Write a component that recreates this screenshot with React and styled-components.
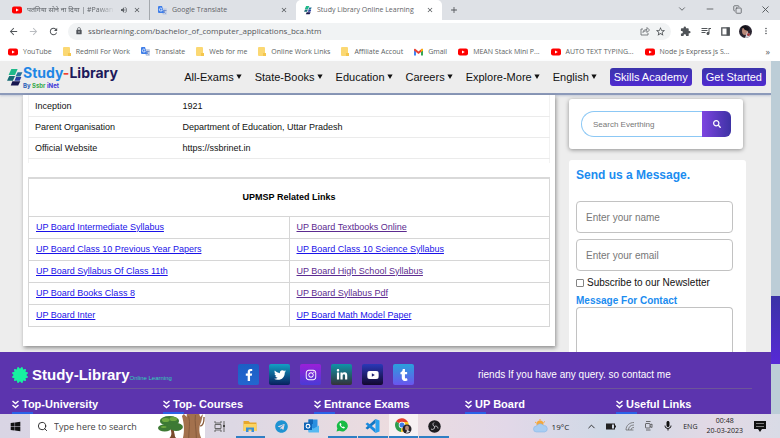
import React from 'react';
import styled, { createGlobalStyle, css } from 'styled-components';
import {
  FaFacebookF, FaTwitter, FaInstagram, FaLinkedinIn, FaYoutube, FaTumblr,
  FaSearch, FaCertificate, FaWindows, FaTelegram,
} from 'react-icons/fa';
import {
  MdArrowBack, MdArrowForward, MdRefresh, MdLock, MdStarBorder, MdClose, MdAdd,
  MdMoreVert, MdExtension, MdQueueMusic, MdVolumeUp, MdMic,
} from 'react-icons/md';
import { ChevronDown, ChevronUp, Minus, Copy, X, Search } from 'lucide-react';

const sans = '"Liberation Sans", Arial, sans-serif';
const chrome = '"Open Sans", "Noto Sans", sans-serif';

const GlobalStyle = createGlobalStyle`
  *, *::before, *::after { box-sizing: border-box; }
  body { margin: 0; font-family: ${sans}; color: #111; }
  button, input, textarea { font-family: inherit; margin: 0; }
  button { border: 0; padding: 0; background: none; color: inherit; cursor: pointer; }
  svg { display: block; flex: none; }
`;

const Screen = styled.div`
  min-height: 100vh;
  display: flex;
  flex-direction: column;
  overflow: hidden;
`;

/* ---------- browser chrome ---------- */

const TabStrip = styled.div`
  display: flex;
  align-items: stretch;
  height: 20px;
  padding-left: 4px;
  background: #dee1e6;
  font: 7px/20px ${chrome};
  color: #5f6368;
`;

const Tab = styled.div`
  display: flex;
  align-items: center;
  gap: 5px;
  width: 146px;
  padding: 0 8px;
  white-space: nowrap;
  ${(p) => p.$active && css`
    background: #fff;
    border-radius: 5px 5px 0 0;
  `}
  ${(p) => p.$divided && css`
    border-right: 1px solid #a5a9ae;
  `}
`;

const TabTitle = styled.span`
  flex: 1;
  min-width: 0;
  overflow: hidden;
  ${(p) => p.$fade && css`
    mask-image: linear-gradient(90deg, #000 80%, transparent);
  `}
`;

const IconButton = styled.button`
  display: grid;
  place-items: center;
  flex: none;
  color: ${(p) => p.$color || '#505458'};
`;

const WindowControls = styled.div`
  display: flex;
  align-items: center;
  gap: 18px;
  margin-left: auto;
  padding: 0 9px 2px 0;
`;

const NewTab = styled(IconButton)`
  padding: 0 7px;
`;

const Toolbar = styled.div`
  display: flex;
  align-items: center;
  gap: 9px;
  height: 22px;
  padding: 0 9px 0 8px;
  background: #fff;
`;

const Omnibox = styled.div`
  flex: 1;
  display: flex;
  align-items: center;
  gap: 5px;
  height: 17px;
  padding: 0 5px 0 7px;
  border-radius: 9px;
  background: #f1f3f4;
  color: #50545a;
`;

const Address = styled.input`
  flex: 1;
  min-width: 0;
  padding: 0;
  border: 0;
  outline: 0;
  background: none;
  font: 8px/16px ${chrome};
  color: #54575b;
`;

const Avatar = styled.span`
  width: 13px;
  height: 13px;
  border-radius: 50%;
  overflow: hidden;
`;

const Bookmarks = styled.nav`
  display: flex;
  align-items: center;
  gap: 11px;
  height: 19px;
  padding: 0 10px 0 8px;
  background: #fff;
  font: 7px/18px ${chrome};
`;

const Bookmark = styled.a`
  display: flex;
  align-items: center;
  gap: 5px;
  color: #5c5f63;
  text-decoration: none;
  white-space: nowrap;
`;

const More = styled.button`
  margin-left: auto;
  font-size: 9px;
  line-height: 9px;
  color: #5c5f63;
`;

/* ---------- website ---------- */

const Viewport = styled.div`
  flex: 1;
  display: flex;
`;

const Site = styled.div`
  flex: 1;
  min-width: 0;
  display: flex;
  flex-direction: column;
  background: #ededed;
`;

const ScrollTrack = styled.div`
  display: grid;
  grid-template-rows: 235fr 68fr 50fr;
  width: 9px;
  background: #bccdd7;
`;

const ScrollThumb = styled.div`
  grid-row: 2;
  background: linear-gradient(#3a33a6, #5729d6);
`;

const SiteHeader = styled.header`
  display: flex;
  align-items: center;
  height: 34px;
  padding: 0 5px 0 7px;
  border-bottom: 2px solid #8c9aba;
  background: #ededed;
  box-shadow: 0 1px 2px #9aa5c080;
`;

const Brand = styled.a`
  display: flex;
  align-items: center;
  margin-right: auto;
  text-decoration: none;
`;

const BrandText = styled.span`
  display: flex;
  flex-direction: column;
  font-family: Inter, ${sans};
  font-weight: 700;
`;

const BrandName = styled.span`
  font-size: 14px;
  line-height: 18px;
  color: #1d1a5b;
`;

const BrandTag = styled.span`
  font-size: 6px;
  line-height: 8px;
  color: #2c61b8;
`;

const Ink = styled.span`
  color: ${(p) => p.$color};
`;

const Menu = styled.nav`
  display: flex;
  align-items: center;
  gap: 13px;
`;

const MenuItem = styled.button`
  display: flex;
  align-items: center;
  gap: 2px;
  font-size: 11px;
  line-height: 16px;
  color: #111;
  white-space: nowrap;
`;

const Actions = styled.div`
  display: flex;
  gap: 10px;
`;

const Action = styled.button`
  height: 18px;
  padding: 0 4px;
  border-radius: 3px;
  background: linear-gradient(#3b34ab, #4f2bd0);
  color: #fff;
  font-size: 11px;
  white-space: nowrap;
`;

const Content = styled.main`
  flex: 1;
  display: flex;
  gap: 14px;
  padding: 0 25px 0 23px;
`;

const Article = styled.article`
  flex: 1;
  align-self: flex-start;
  min-width: 0;
  margin-bottom: 6px;
  padding: 0 5px 19px;
  background: #fff;
  box-shadow: 1px 2px 4px #00000066;
`;

const FactTable = styled.table`
  width: 100%;
  margin-bottom: 14px;
  border-collapse: collapse;
  border: solid #f2f2f2;
  border-width: 0 1px;
  font-size: 9px;
  line-height: 20px;
  th, td {
    padding: 0 0 0 6px;
    border-bottom: 1px solid #ebebeb;
    font-weight: 400;
    text-align: left;
  }
  tr:first-child > * { padding-top: 1px; }
  th { width: 148px; }
  &::after { content: ''; display: block; height: 4px; }
`;

const LinkTable = styled.table`
  width: 100%;
  table-layout: fixed;
  border-collapse: collapse;
  border: 1px solid #d9d9d9;
  border-top-width: 2px;
  font-size: 9px;
  line-height: 21px;
  th { height: 38px; font-size: 9px; font-weight: 700; color: #000; }
  td { padding: 0 0 0 7px; border: 1px solid #d6d6d6; }
`;

const PageLink = styled.a`
  color: ${(p) => (p.$visited ? '#5c2b90' : '#1a12e8')};
  text-decoration: underline;
`;

const Sidebar = styled.aside`
  display: flex;
  flex-direction: column;
  gap: 11px;
  width: 177px;
  padding-top: 4px;
`;

const SearchCard = styled.form`
  display: flex;
  margin-right: 3px;
  padding: 12px;
  border-radius: 3px;
  background: #fff;
  box-shadow: 0 1px 4px #00000066;
`;

const SearchField = styled.input`
  flex: 1;
  min-width: 0;
  height: 26px;
  padding: 0 11px;
  border: 1px solid #8cc8f5;
  border-right: 0;
  border-radius: 13px 0 0 13px;
  outline: 0;
  font-size: 8px;
  &::placeholder { color: #777; }
`;

const SearchButton = styled.button`
  display: grid;
  place-items: center;
  width: 29px;
  height: 26px;
  border-radius: 0 6px 6px 0;
  background: linear-gradient(90deg, #7d45e0, #3d32a4);
  color: #fff;
`;

const MessageCard = styled.form`
  flex: 1;
  display: flex;
  flex-direction: column;
  padding: 8px 13px 0 7px;
  border-radius: 3px 3px 0 0;
  background: #fff;
`;

const MessageTitle = styled.h2`
  margin: 0 0 18px;
  font-size: 12px;
  line-height: 15px;
  color: #1b8cf0;
`;

const field = css`
  width: 100%;
  padding: 0 9px;
  border: 1px solid #c2c2c2;
  border-radius: 4px;
  outline: 0;
  background: #fff;
  font-size: 10px;
`;

const TextField = styled.input`
  ${field}
  height: 32px;
  margin-bottom: 6px;
  &::placeholder { color: #777; }
`;

const CheckLine = styled.label`
  display: flex;
  align-items: center;
  gap: 3px;
  margin-bottom: 6px;
  font-size: 10px;
  line-height: 12px;
  white-space: nowrap;
`;

const Check = styled.input`
  appearance: none;
  width: 8px;
  height: 8px;
  border: 1px solid #858585;
  border-radius: 1px;
  background: #fff;
  &:checked { background: #1b8cf0; }
`;

const MessageLabel = styled.label`
  font-size: 10px;
  font-weight: 700;
  line-height: 12px;
  color: #1b8cf0;
`;

const MessageBox = styled.textarea`
  ${field}
  flex: 1;
  height: 44px;
  padding-top: 6px;
  border-bottom: 0;
  border-radius: 4px 4px 0 0;
  resize: none;
`;

const SiteFooter = styled.footer`
  padding: 0 4px 0 12px;
  background: #5c34ae;
  color: #fff;
`;

const FooterTop = styled.div`
  display: grid;
  grid-template-columns: 226fr 240fr 274fr;
  align-items: center;
  height: 37px;
  margin-right: 15px;
  padding-top: 9px;
  border-bottom: 1px solid #6d5499;
`;

const FooterBrand = styled.a`
  display: flex;
  align-items: center;
  gap: 4px;
  color: #fff;
  font-size: 15px;
  font-weight: 700;
  text-decoration: none;
  white-space: nowrap;
`;

const FooterTag = styled.span`
  font-size: 6px;
  font-weight: 400;
  color: #2fd4b8;
`;

const Socials = styled.div`
  display: flex;
  gap: 10px;
`;

const Social = styled.a`
  display: grid;
  place-items: center;
  width: 21px;
  height: 21px;
  border-radius: 2px;
  background: linear-gradient(${(p) => p.$from}, ${(p) => p.$to});
  color: #fff;
`;

const Notice = styled.p`
  margin: 0;
  font-size: 10px;
  white-space: nowrap;
`;

const FooterColumns = styled.div`
  display: grid;
  grid-template-columns: repeat(5, 1fr);
  padding-top: 8px;
`;

const FooterHeading = styled.h3`
  display: flex;
  align-items: center;
  gap: 3px;
  margin: 0;
  font-size: 11px;
  line-height: 15px;
  white-space: nowrap;
  border-bottom: 2px solid;
  border-image: linear-gradient(90deg, #2b62e8 22px, transparent 22px) 2;
`;

/* ---------- desktop taskbar ---------- */

const Taskbar = styled.div`
  display: flex;
  align-items: stretch;
  height: 24px;
  background: linear-gradient(90deg, #d9d5e4, #ddd8e4 30%, #ecdcdf 50%, #e2d8e8 65%, #cfd9e6 78%, #e3d9e5 92%, #d9dbe6);
  font-family: ${chrome};
  color: #222;
`;

const Start = styled(IconButton)`
  width: 30px;
  color: #111;
`;

const TaskSearch = styled.label`
  display: flex;
  align-items: center;
  gap: 6px;
  width: 175px;
  padding-left: 7px;
  background: #fff;
`;

const TaskSearchInput = styled.input`
  flex: 1;
  min-width: 0;
  padding: 0;
  border: 0;
  outline: 0;
  background: none;
  font-size: 9px;
  &::placeholder { color: #444; opacity: 1; }
`;

const Apps = styled.div`
  display: grid;
  grid-template-columns: repeat(8, 1fr);
  width: 245px;
`;

const AppButton = styled.button`
  display: grid;
  place-items: center;
  margin-right: 1px;
  border-bottom: 2px solid ${(p) => (p.$open ? '#2f7fc4' : 'transparent')};
  padding-top: 2px;
  background: ${(p) => (p.$current ? '#ffffff99' : 'none')};
`;

const Tray = styled.div`
  display: flex;
  align-items: center;
  gap: 9px;
  margin-left: auto;
  padding-right: 14px;
  font-size: 7px;
`;

const Weather = styled.div`
  display: flex;
  align-items: center;
  gap: 4px;
  margin-right: 8px;
  font-size: 8px;
`;

const Clock = styled.time`
  margin-right: 2px;
  line-height: 10px;
  text-align: center;
`;

/* ---------- drawings ---------- */

const YouTubeMark = () => (
  <svg width="10" height="8" viewBox="0 0 10 8">
    <rect y=".5" width="10" height="7" rx="2" fill="#f00" />
    <path d="M4 2.4 6.8 4 4 5.6z" fill="#fff" />
  </svg>
);

const TranslateMark = () => (
  <svg width="9" height="9" viewBox="0 0 18 18">
    <path d="M8 4h8a2 2 0 0 1 2 2v10a2 2 0 0 1-2 2h-6z" fill="#c9d3e6" />
    <path d="M10 9h7M13.5 7.5V9c0 3-2 5-4 6m1-5c1 2 3 4 5 5" stroke="#5b7cc4" strokeWidth="1.4" fill="none" />
    <path d="M2 0h6l4 14H2a2 2 0 0 1-2-2V2a2 2 0 0 1 2-2z" fill="#3f7ee8" />
    <path d="M8 5.3A3 3 0 1 0 8.6 8H6" stroke="#fff" strokeWidth="1.4" fill="none" />
  </svg>
);

const FolderMark = () => (
  <svg width="8" height="9" viewBox="0 0 8 9">
    <rect width="7" height="9" rx="1" fill="#fbd873" />
    <path d="M5 6h3v3H5z" fill="#f4c64e" />
  </svg>
);

const GmailMark = () => (
  <svg width="9" height="8" viewBox="0 0 18 14">
    <path d="M0 2v12h4V5z" fill="#4285f4" />
    <path d="M18 2v12h-4V5z" fill="#34a853" />
    <path d="M0 2c0-2 2-2 3-1l6 5 6-5c1-1 3-1 3 1v2l-9 7-9-7z" fill="#ea4335" />
    <path d="M14 2.500 15 1c1-1 3-1 3 1v2l-4 3z" fill="#fbbc04" />
  </svg>
);

const LibraryMark = ({ size = 16 }) => (
  <svg width={size} height={size + 2} viewBox="0 0 30 34">
    <path d="M8 2h12l-5 11H3z" fill="#1fb98a" />
    <path d="M20 8h9l-4 8h-9z" fill="#27709a" />
    <path d="M4 15h11l-4 9H0z" fill="#176b74" />
    <path d="M17 17h10l-3 7H14z" fill="#2a3ea0" />
    <path d="M10 25h15l-4 8H7z" fill="#17174f" />
  </svg>
);

const ShareMark = () => (
  <svg width="10" height="10" viewBox="0 0 20 20" fill="none" stroke="#5f6368" strokeWidth="1.6">
    <path d="M6 6H2v12h14v-4" />
    <path d="M6 13c0-5 4-6 8-6V3l5 5-5 5V9.500c-4 0-6 1-8 3.500z" />
  </svg>
);

const PanelMark = () => (
  <svg width="9" height="9" viewBox="0 0 9 9">
    <path d="M.8.800h7.400v7.400H.8z" fill="none" stroke="#505458" strokeWidth="1.300" />
    <path d="M5.500.500h3v8h-3z" fill="#505458" />
  </svg>
);

const Portrait = () => (
  <svg width="13" height="13" viewBox="0 0 26 26">
    <rect width="26" height="26" fill="#2a2430" />
    <ellipse cx="12" cy="12" rx="6" ry="8" fill="#b98878" />
    <path d="M3 6c5-7 15-6 17 2l-2 4c-4-1-8-2-9-6z" fill="#15131a" />
    <path d="M12 26l4-12 6 4 2 8z" fill="#d6d3dc" />
    <circle cx="19" cy="19" r="3" fill="#a03a3c" />
  </svg>
);

const Caret = () => (
  <svg width="6" height="6" viewBox="0 0 6 6"><path d="M.4.500h5.200L3 5z" fill="#111" /></svg>
);

const DoubleDown = () => (
  <svg width="7" height="9" viewBox="0 0 14 18" fill="none" stroke="#fff" strokeWidth="3">
    <path d="M1 2l6 5 6-5M1 10l6 5 6-5" />
  </svg>
);

const TreeArt = () => (
  <svg width="48" height="24" viewBox="0 0 50 24" preserveAspectRatio="none">
    <path d="M13 24c3-3 2-6 1-9l3-2 1 6c1 2 0 4 2 5z" fill="#7a4a2c" />
    <g fill="#3d7a34">
      <ellipse cx="8" cy="14" rx="7" ry="3.500" />
      <ellipse cx="13" cy="7" rx="10" ry="5" />
      <ellipse cx="20" cy="13" rx="7" ry="4" />
    </g>
    <g fill="#6fa840">
      <ellipse cx="9" cy="6" rx="4" ry="2" />
      <ellipse cx="17" cy="5" rx="4" ry="2" />
      <ellipse cx="7" cy="13" rx="3" ry="1" />
    </g>
    <path d="M27 24c2-7 1-16-1-22l2-2 3 3V0h13l1 3 3-3-2 8c-3 5-2 12 0 16z" fill="#a3714d" />
    <path d="M33 2c2 7 0 14 0 22M40 1c-1 7 1 15 1 23" stroke="#855a3c" fill="none" />
    <path d="M45 12c3 0 4-3 4-9" stroke="#8a5c3c" strokeWidth="1.400" fill="none" />
  </svg>
);

const TaskViewMark = () => (
  <svg width="12" height="11" viewBox="0 0 12 11" fill="none" stroke="#666">
    <path d="M1 0v2h6V0M1 11V9h6v2M1 3.500h6v4H1zM10 0v11" />
    <path d="M9 4h2v2H9z" fill="#444" stroke="none" />
  </svg>
);

const ExplorerMark = () => (
  <svg width="14" height="12" viewBox="0 0 28 24">
    <path d="M1 2h10l3 3h13v17H1z" fill="#e7a82c" />
    <path d="M1 8h26v14H1z" fill="#fcd462" />
    <path d="M6 24v-9h16v9h-5v-5h-6v5z" fill="#3a8fd6" />
  </svg>
);

const OutlookMark = () => (
  <svg width="15" height="14" viewBox="0 0 30 28">
    <path d="M9 1h18v24H9z" fill="#2a8fe0" />
    <path d="M9 1h9v9H9z" fill="#1367b8" />
    <path d="M9 14l10 5 11-6v14H9z" fill="#55b9f2" />
    <rect y="7" width="16" height="15" rx="1" fill="#0f64b6" />
    <circle cx="8" cy="14.500" r="3.800" fill="none" stroke="#fff" strokeWidth="2.200" />
  </svg>
);

const WhatsAppMark = () => (
  <svg width="12" height="12" viewBox="0 0 24 24">
    <path d="M1 23l1.800-6A11 11 0 1 1 7 21.500z" fill="#18bb45" />
    <path d="M8 6.500c-2 2-.500 5 2 7.500s5.500 4 7.500 2l.200-1.600-3-1.600-1.400 1.400c-1.600-.600-2.900-2-3.600-3.500l1.300-1.500-1.400-3z" fill="#fff" />
  </svg>
);

const CodeMark = () => (
  <svg width="15" height="14" viewBox="0 0 30 28">
    <path d="M21 0l8 3v22l-8 3z" fill="#2aa2ee" />
    <path d="M21 0v8L5 21l-4-3z" fill="#1277c4" />
    <path d="M21 28v-8L5 7l-4 3z" fill="#1a8ade" />
  </svg>
);

const ChromeMark = () => (
  <svg width="17" height="16" viewBox="0 0 34 32">
    <path d="M14 14 2 7A14 14 0 0 1 26 8z" fill="#e4402f" />
    <path d="M14 14 2 7a14 14 0 0 0 10 21z" fill="#2f9e4d" />
    <path d="M14 14l-2 14A14 14 0 0 0 26 8H14z" fill="#fbc520" />
    <circle cx="14" cy="14" r="6.500" fill="#fff" />
    <circle cx="14" cy="14" r="5" fill="#3f7de8" />
    <circle cx="24" cy="22" r="9" fill="#262229" />
    <ellipse cx="24" cy="20" rx="4" ry="5" fill="#b48a7a" />
    <path d="M22 30l3-7 5 5z" fill="#ddd" />
  </svg>
);

const ObsMark = () => (
  <svg width="13" height="13" viewBox="0 0 26 26">
    <circle cx="13" cy="13" r="12.500" fill="#1d1c20" />
    <g fill="none" stroke="#bdbcc2" strokeWidth="2">
      <path d="M12 5a4.500 4.500 0 0 0 1 8" />
      <path d="M20 17a4.500 4.500 0 0 0-7-4" />
      <path d="M6 18a4.500 4.500 0 0 0 7-5" />
    </g>
  </svg>
);

const WeatherMark = () => (
  <svg width="15" height="14" viewBox="0 0 30 28">
    <circle cx="14" cy="10" r="7" fill="#f6a83a" />
    <path d="M14 0v3M4 6l3 2M24 5l-3 2" stroke="#f6a83a" strokeWidth="2" />
    <path d="M7 26a6 6 0 0 1 0-12 8 8 0 0 1 14-1 6.500 6.500 0 0 1 2 13z" fill="#a9cdf2" stroke="#7fb2e6" />
  </svg>
);

const BatteryMark = () => (
  <svg width="10" height="7" viewBox="0 0 10 7">
    <rect x=".5" y="1" width="8" height="5" fill="none" stroke="#222" />
    <path d="M1 1h5v5H1zM9 2.500h1v2H9z" fill="#222" />
  </svg>
);

const WifiMark = () => (
  <svg width="10" height="10" viewBox="0 0 20 20" fill="none" stroke="#666" strokeWidth="1.500">
    <path d="M2 18C2 9 9 3 18 3M7 18C7 12 11 8 18 8M12 18c0-3 2-5 6-5M2 18h15" />
  </svg>
);

const MeetMark = () => (
  <svg width="9" height="10" viewBox="0 0 18 20" fill="none" stroke="#444" strokeWidth="1.500">
    <rect x="3" y="5" width="9" height="9" rx="1" />
    <path d="M12 8l4-2v7l-4-2M4 1h9M4 18h9" />
  </svg>
);

const NoteMark = () => (
  <svg width="12" height="11" viewBox="0 0 12 11">
    <path d="M0 0h12v8H8L6 11 4 8H0z" fill="#111" />
    <path d="M2 2.500h8M2 5.500h8" stroke="#999" strokeWidth=".8" />
  </svg>
);

/* ---------- content ---------- */

const bookmarks = [
  ['YouTube', YouTubeMark], ['Redmil For Work', FolderMark], ['Translate', TranslateMark],
  ['Web for me', FolderMark], ['Online Work Links', FolderMark], ['Affiliate Accout', FolderMark],
  ['Gmail', GmailMark], ['MEAN Stack Mini P...', YouTubeMark], ['AUTO TEXT TYPING...', YouTubeMark],
  ['Node js Express js S...', YouTubeMark],
];

const menu = ['All-Exams', 'State-Books', 'Education', 'Careers', 'Explore-More', 'English'];

const facts = [
  ['Inception', '1921'],
  ['Parent Organisation', 'Department of Education, Uttar Pradesh'],
  ['Official Website', 'https://ssbrinet.in'],
];

const links = [
  [['UP Board Intermediate Syllabus'], ['UP Board Textbooks Online', true]],
  [['UP Board Class 10 Previous Year Papers'], ['UP Board Class 10 Science Syllabus']],
  [['UP Board Syllabus Of Class 11th'], ['UP Board High School Syllabus', true]],
  [['UP Board Books Class 8'], ['UP Board Syllabus Pdf', true]],
  [['UP Board Inter'], ['UP Board Math Model Paper']],
];

const socials = [
  ['Facebook', FaFacebookF, '#1c5fc4', '#2366cf'],
  ['Twitter', FaTwitter, '#149fc4', '#08205e'],
  ['Instagram', FaInstagram, '#9a1fd8', '#4a3ad6'],
  ['LinkedIn', FaLinkedinIn, '#0f93a8', '#343238'],
  ['YouTube', FaYoutube, '#2a38b8', '#12082e'],
  ['Tumblr', FaTumblr, '#2aa0dc', '#6a55ee'],
];

const columns = ['Top-University', 'Top- Courses', 'Entrance Exams', 'UP Board', 'Useful Links'];

const apps = [
  ['File Explorer', <ExplorerMark />, true],
  ['Telegram', <FaTelegram size={13} color="#1f93d2" />],
  ['Outlook', <OutlookMark />],
  ['WhatsApp', <WhatsAppMark />, true],
  ['Code', <CodeMark />, true],
  ['Chrome', <ChromeMark />, true, true],
  ['OBS Studio', <ObsMark />, true],
];

const CloseTab = () => (
  <IconButton aria-label="Close tab"><MdClose size={8} /></IconButton>
);

export default function App() {
  return (
    <Screen>
      <GlobalStyle />
      <TabStrip>
        <Tab $divided>
          <YouTubeMark />
          <TabTitle $fade>पतंगिया सोने ना दिया | #Pawan</TabTitle>
          <MdVolumeUp size={8} />
          <CloseTab />
        </Tab>
        <Tab>
          <TranslateMark />
          <TabTitle>Google Translate</TabTitle>
          <CloseTab />
        </Tab>
        <Tab $active>
          <LibraryMark size={8} />
          <TabTitle>Study Library Online Learning</TabTitle>
          <CloseTab />
        </Tab>
        <NewTab aria-label="New tab"><MdAdd size={10} /></NewTab>
        <WindowControls>
          <IconButton aria-label="Search tabs"><ChevronDown size={10} /></IconButton>
          <IconButton aria-label="Minimize"><Minus size={10} /></IconButton>
          <IconButton aria-label="Restore"><Copy size={9} /></IconButton>
          <IconButton aria-label="Close"><X size={11} /></IconButton>
        </WindowControls>
      </TabStrip>

      <Toolbar>
        <IconButton aria-label="Back"><MdArrowBack size={11} /></IconButton>
        <IconButton aria-label="Forward" $color="#b9bcc0"><MdArrowForward size={11} /></IconButton>
        <IconButton aria-label="Reload"><MdRefresh size={11} /></IconButton>
        <Omnibox>
          <MdLock size={8} />
          <Address
            aria-label="Address"
            defaultValue="ssbrlearning.com/bachelor_of_computer_applications_bca.htm"
          />
          <IconButton aria-label="Share"><ShareMark /></IconButton>
          <IconButton aria-label="Bookmark"><MdStarBorder size={11} /></IconButton>
        </Omnibox>
        <IconButton aria-label="Extensions"><MdExtension size={11} /></IconButton>
        <IconButton aria-label="Media"><MdQueueMusic size={12} /></IconButton>
        <IconButton aria-label="Side panel"><PanelMark /></IconButton>
        <Avatar><Portrait /></Avatar>
        <IconButton aria-label="Menu"><MdMoreVert size={10} /></IconButton>
      </Toolbar>

      <Bookmarks>
        {bookmarks.map(([name, Mark]) => (
          <Bookmark key={name} href="#"><Mark />{name}</Bookmark>
        ))}
        <More aria-label="More bookmarks">»</More>
      </Bookmarks>

      <Viewport>
        <Site>
          <SiteHeader>
            <Brand href="#">
              <LibraryMark />
              <BrandText>
                <BrandName><Ink $color="#1f87e5">Study</Ink><Ink $color="#f0412c">-</Ink>Library</BrandName>
                <BrandTag>By <Ink $color="#35a84a">Ssbr</Ink> <Ink $color="#3c33d8">iNet</Ink></BrandTag>
              </BrandText>
            </Brand>
            <Menu>
              {menu.map((item) => <MenuItem key={item}>{item}<Caret /></MenuItem>)}
              <Actions>
                <Action>Skills Academy</Action>
                <Action>Get Started</Action>
              </Actions>
            </Menu>
          </SiteHeader>

          <Content>
            <Article>
              <FactTable>
                <tbody>
                  {facts.map(([name, value]) => (
                    <tr key={name}><th scope="row">{name}</th><td>{value}</td></tr>
                  ))}
                </tbody>
              </FactTable>
              <LinkTable>
                <thead><tr><th colSpan={2}>UPMSP Related Links</th></tr></thead>
                <tbody>
                  {links.map((row) => (
                    <tr key={row[0][0]}>
                      {row.map(([text, visited]) => (
                        <td key={text}><PageLink href="#" $visited={visited}>{text}</PageLink></td>
                      ))}
                    </tr>
                  ))}
                </tbody>
              </LinkTable>
            </Article>

            <Sidebar>
              <SearchCard>
                <SearchField aria-label="Search" placeholder="Search Everthing" />
                <SearchButton type="button" aria-label="Search"><FaSearch size={8} /></SearchButton>
              </SearchCard>
              <MessageCard>
                <MessageTitle>Send us a Message.</MessageTitle>
                <TextField aria-label="Name" placeholder="Enter your name" />
                <TextField aria-label="Email" type="email" placeholder="Enter your email" />
                <CheckLine><Check type="checkbox" />Subscribe to our Newsletter</CheckLine>
                <MessageLabel htmlFor="message">Message For Contact</MessageLabel>
                <MessageBox id="message" />
              </MessageCard>
            </Sidebar>
          </Content>

          <SiteFooter>
            <FooterTop>
              <FooterBrand href="#">
                <FaCertificate size={16} color="#17f0a0" />
                <span>Study-Library<FooterTag>Online Learning</FooterTag></span>
              </FooterBrand>
              <Socials>
                {socials.map(([name, Icon, from, to]) => (
                  <Social key={name} href="#" aria-label={name} $from={from} $to={to}><Icon size={12} /></Social>
                ))}
              </Socials>
              <Notice>riends If you have any query. so contact me</Notice>
            </FooterTop>
            <FooterColumns>
              {columns.map((name) => (
                <FooterHeading key={name}><DoubleDown />{name}</FooterHeading>
              ))}
            </FooterColumns>
          </SiteFooter>
        </Site>
        <ScrollTrack><ScrollThumb /></ScrollTrack>
      </Viewport>

      <Taskbar>
        <Start aria-label="Start"><FaWindows size={11} /></Start>
        <TaskSearch>
          <Search size={11} />
          <TaskSearchInput aria-label="Type here to search" placeholder="Type here to search" />
          <TreeArt />
        </TaskSearch>
        <Apps>
          <AppButton aria-label="Task view"><TaskViewMark /></AppButton>
          {apps.map(([name, mark, open, current]) => (
            <AppButton key={name} aria-label={name} $open={open} $current={current}>{mark}</AppButton>
          ))}
        </Apps>
        <Tray>
          <Weather><WeatherMark />19°C</Weather>
          <ChevronUp size={11} />
          <BatteryMark />
          <WifiMark />
          <MeetMark />
          <MdMic size={12} color="#111" />
          <span>ENG</span>
          <Clock>00:48<br />20-03-2023</Clock>
          <NoteMark />
        </Tray>
      </Taskbar>
    </Screen>
  );
}
